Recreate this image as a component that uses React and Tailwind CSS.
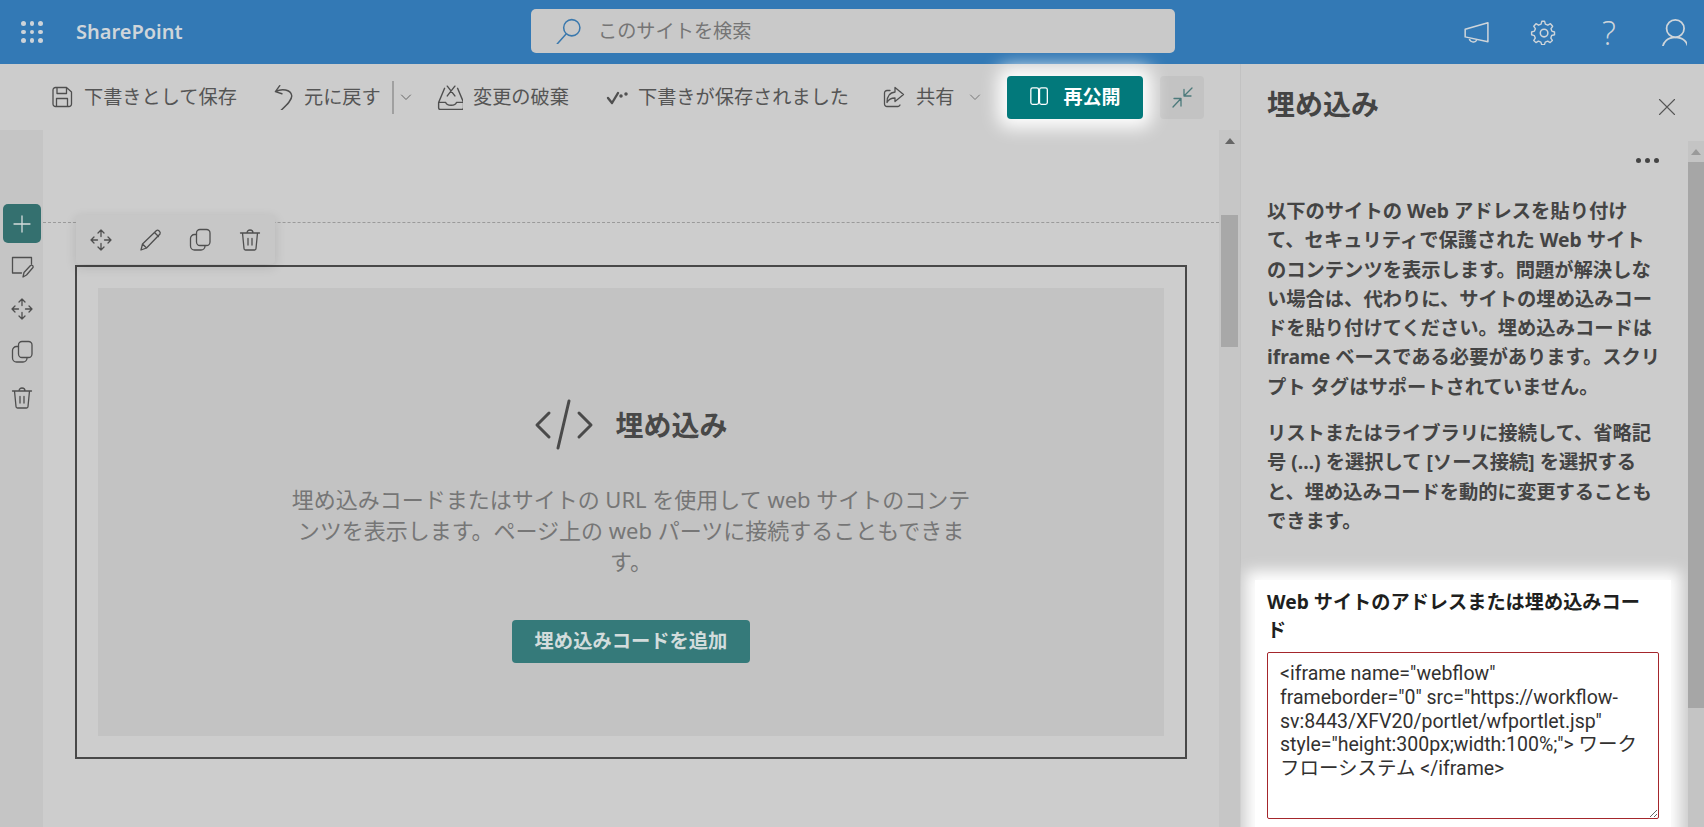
import React from "react";

const S = ({ w = 24, h = 24, vb = "0 0 24 24", c = "#4f4f4f", sw = 1.3, children, className = "" }) => (
  <svg width={w} height={h} viewBox={vb} fill="none" stroke={c} strokeWidth={sw} strokeLinecap="round" strokeLinejoin="round" className={"shrink-0 " + className}>{children}</svg>
);
const Chevron = ({ c = "#666" }) => (<S w={12} h={12} vb="0 0 12 12" c={c} sw={1}><path d="M1.500 4l4.500 4.500L10.500 4" /></S>);
const Move = () => (<S w={24} h={24}><path d="M12 2v6.500M12 15.500V22M2 12h6.500M15.500 12H22M9 5l3-3 3 3M9 19l3 3 3-3M5 9l-3 3 3 3M19 9l3 3-3 3" /></S>);
const Copy = () => (<S w={24} h={24}><rect x="8.500" y="1.500" width="13.500" height="16" rx="3.500" /><path d="M8.500 6.500H6.500a4 4 0 0 0-4 4v7.500a4 4 0 0 0 4 4h6.500a4 4 0 0 0 4-4" /></S>);
const Trash = () => (<S w={24} h={24}><path d="M2.500 5h19M4.500 5l1.500 15.500a1.500 1.500 0 0 0 1.500 1.500h9a1.500 1.500 0 0 0 1.500-1.500L19.500 5M9 5c0-4 6-4 6 0M10 10.500v6.500M14 10.500v6.500" /></S>);
const Pencil = () => (<S w={24} h={24}><path d="M2 22l1.500-6L17.500 2.500c1.500-1.200 4.500 1.500 3.500 3.500L7.500 20z M3.500 16l4 4M15.500 4.500l4 4" /></S>);

const font = "font-['Noto_Sans','Noto_Sans_CJK_JP',sans-serif]";

export default function App() {
  return (
    <div className={"w-[1704px] h-[827px] overflow-hidden flex flex-col bg-[#cccccc] " + font}>
      <header className="h-16 shrink-0 bg-[#3379b5] flex items-center pr-[17px]">
        <div className="ml-[21px] w-[22px] grid grid-cols-3 gap-[4px]">
          {Array.from({ length: 9 }).map((_, i) => (<span key={i} className="w-[4.500px] h-[4.500px] rounded-full bg-[#cdd3d9]" />))}
        </div>
        <span className="ml-[33px] w-[108px] text-[20px] font-semibold text-[#cfd5da] whitespace-nowrap">SharePoint</span>
        <div className="ml-[347px] -mt-[2px] w-[644px] h-[44px] rounded-[5px] bg-[#c9c9c9] flex items-center pl-[24px]">
          <S w={26} h={26} c="#3a78ad" sw={1.400}><path d="M2 24L10 15" /><circle cx="15.500" cy="9" r="7.500" /></S>
          <span className="ml-[17px] text-[19.200px] leading-none text-[#757575]">このサイトを検索</span>
        </div>
        <div className="ml-auto flex items-center">
          <S w={26} h={26} c="#cfd5da" sw={1.400}><path d="M2 9.500L23 3.500V21L2 16.500zM6 17.500c-.5 4 5.500 5 6.500 2" /></S>
          <S w={26} h={26} c="#cfd5da" sw={1.400} className="ml-[41px]"><circle cx="13" cy="13" r="3.500" /><path d="M13 2l2 0 .8 3 2.500 1 2.600-1.500 2.200 2.600-1.600 2.400.8 2.500 2.700.8v2.800l-2.900.8-.8 2.500 1.500 2.400-2.200 2.200-2.400-1.500-2.500 1-.8 2.500h-2.800l-.8-2.500-2.500-1-2.400 1.500-2.200-2.200 1.500-2.400-1-2.500-2.700-.8v-2.800l2.800-.8 1-2.500-1.600-2.400 2.200-2.600 2.600 1.500 2.500-1 .8-3z" transform="scale(.92) translate(-.4 .2)" /></S>
          <span className="ml-[46px] w-[17px] text-[33px] leading-none font-light text-[#cfd5da] font-['Open_Sans',sans-serif]">?</span>
          <S w={28} h={28} c="#cfd5da" sw={1.500} className="ml-[40px]"><circle cx="14" cy="9" r="7.500" /><path d="M3 27c0-7 5-10.500 11-10.500S25 20 25 27" /></S>
        </div>
      </header>
      <div className="flex flex-1 min-h-0">
        <main className="w-[1240px] shrink-0 flex flex-col">
          <div className="relative h-[66px] shrink-0 flex items-center text-[19.200px] text-[#555555] whitespace-nowrap">
            <S w={24} h={24} className="ml-[50px]"><path d="M3 5a2.500 2.500 0 0 1 2.500-2.500h11L21.500 7v12a2.500 2.500 0 0 1-2.500 2.500H5.500A2.500 2.500 0 0 1 3 19zM7 2.500v6h9.500v-6M6.500 21.500v-8h11v8" /></S>
            <span className="ml-[10px] w-[152px]">下書きとして保存</span>
            <S w={26} h={26} className="ml-[34px]"><path d="M9 1.500L5 7l6 2M5 7c6-3 14-2 15 3.500.7 4-4 8.500-10 14" /></S>
            <span className="ml-[8px] w-[76px]">元に戻す</span>
            <span className="ml-[12px] w-[2px] h-[33px] bg-[#a0a0a0]" />
            <span className="ml-[6px]"><Chevron /></span>
            <S w={26} h={26} className="ml-[25px]"><path d="M1.500 17L7 4M24.500 17L19 4M1.500 17v5a1.500 1.500 0 0 0 1.500 1.500h20a1.500 1.500 0 0 0 1.500-1.500v-5M1.500 17H8c1 3.500 9 3.500 10 0h6.500M9.500 2l7 9M16.500 2l-7 9" /></S>
            <span className="ml-[10px] w-[95px]">変更の破棄</span>
            <S w={24} h={24} className="ml-[38px]"><path d="M2 13l4 5 6-10" strokeWidth="2.400" /><circle cx="15" cy="11" r="1.100" fill="#4f4f4f" /><circle cx="20" cy="9" r="1.100" fill="#4f4f4f" /></S>
            <span className="ml-[8px] w-[210px]">下書きが保存されました</span>
            <S w={24} h={24} className="ml-[34px]"><path d="M13 2.500l8.500 7-8.500 7V13c-4 0-6.500 1.500-8 4.500 0-6 3-10 8-10.500zM18 20a2.500 2.500 0 0 1-2 1.500H5A2.500 2.500 0 0 1 2.500 19V8A2.500 2.500 0 0 1 5 5.500h3" /></S>
            <span className="ml-[10px] w-[38px]">共有</span>
            <span className="ml-[15px]"><Chevron c="#777" /></span>
            <button className="ml-[26px] w-[136px] h-[43px] rounded-[4px] bg-[#02797b] text-white font-bold text-[19px] flex items-center justify-center gap-[12px] relative z-10 shadow-[0_0_18px_9px_#ffffff]">
              <S w={22} h={22} c="#ffffff" sw={1.400}><rect x="2" y="2" width="8.500" height="18" rx="2" /><rect x="11.500" y="2" width="8.500" height="18" rx="2" /></S>
              再公開
            </button>
            <div className="ml-[17px] w-[44px] h-[43px] rounded-[4px] bg-[#c3c3c3] flex items-center justify-center">
              <S w={24} h={24} c="#4c7a7b" sw={1.300}><path d="M14 11L22 3M14 4.500V11h7M11 13.500L3 22M4 13.500h7V21" /></S>
            </div>
          </div>
          <div className="flex flex-1 min-h-0">
            <aside className="w-[43px] shrink-0 bg-[#c5c5c5] flex flex-col items-center pt-[74px]">
              <div className="w-[38px] h-[39px] rounded-[5px] bg-[#34706f] flex items-center justify-center">
                <S w={18} h={18} c="#d5dcdc" sw={1.300} vb="0 0 18 18"><path d="M9 1v16M1 9h16" /></S>
              </div>
              <div className="mt-[12px] h-[24px]">
                <S w={24} h={24}><path d="M21.500 9V2.500h-19v15.500h9M13 22l1-4.500 6.500-7c1.500-1 3 .5 2.500 2l-6.500 7.500z" /></S>
              </div>
              <div className="mt-[18px] h-[24px]"><Move /></div>
              <div className="mt-[19px] h-[24px]"><Copy /></div>
              <div className="mt-[22px] h-[24px]"><Trash /></div>
            </aside>
            <section className="relative flex-1 min-w-0 bg-[#cdcdcd] pt-[92px]">
              <div className="border-t border-dashed border-[#9a9a9a] w-full" />
              <div className="absolute left-[33px] top-[85px] w-[199px] h-[49px] rounded-[4px] bg-[#c7c7c7] shadow-[0_3px_12px_rgba(0,0,0,0.12)] flex items-center justify-between px-[13px] z-10">
                <Move /><Pencil /><Copy /><Trash />
              </div>
              <div className="ml-[32px] mt-[42px] w-[1112px] h-[494px] border-2 border-[#484848] p-[21px]">
                <div className="h-full bg-[#c3c3c3] flex flex-col items-center pt-[111px]">
                  <div className="flex items-center h-[52px]">
                    <S w={60} h={52} vb="0 0 60 52" c="#4a4a4a" sw={3}><path d="M15 14L3 26l12 12M45 14l12 12-12 12M35 2L24 49" /></S>
                    <span className="ml-[21px] text-[28px] font-bold text-[#484848] leading-none">埋め込み</span>
                  </div>
                  <p className="mt-[33px] w-[685px] text-center text-[22px] leading-[31px] text-[#767676]">埋め込みコードまたはサイトの URL を使用して web サイトのコンテンツを表示します。ページ上の web パーツに接続することもできます。</p>
                  <button className="mt-[43px] w-[238px] h-[43px] rounded-[4px] bg-[#357a7a] text-[#d2dcdc] font-bold text-[19.300px]">埋め込みコードを追加</button>
                </div>
              </div>
            </section>
            <div className="w-[21px] shrink-0 bg-[#c6c6c6] flex flex-col items-center relative z-10">
              <span className="mt-[8px] w-0 h-0 border-x-[5px] border-x-transparent border-b-[6px] border-b-[#666666]" />
              <span className="mt-[71px] w-[17px] h-[132px] bg-[#a8a8a8]" />
            </div>
          </div>
        </main>
        <aside className="flex-1 min-w-0 flex flex-col border-l border-[#c2c2c2]">
          <div className="h-[77px] shrink-0 flex items-center pl-[26px] pr-[28px] pt-[2px] justify-between">
            <h1 className="text-[28px] font-bold text-[#444444] leading-none">埋め込み</h1>
            <S w={18} h={18} vb="0 0 18 18" c="#555" sw={1.100} className="mt-[6px]"><path d="M1.500 1.500l15 15M16.500 1.500l-15 15" /></S>
          </div>
          <div className="flex flex-1 min-h-0">
            <div className="flex-1 min-w-0 pl-[26px] pr-[29px] relative">
              <div className="absolute right-[29px] top-[17px] flex gap-[4px]">
                <span className="w-[5px] h-[5px] rounded-full bg-[#444444]" /><span className="w-[5px] h-[5px] rounded-full bg-[#444444]" /><span className="w-[5px] h-[5px] rounded-full bg-[#444444]" />
              </div>
              <div className="pt-[55px] text-[19.300px] leading-[29.300px] font-bold text-[#444444] whitespace-nowrap">
                <p>以下のサイトの Web アドレスを貼り付け<br />て、セキュリティで保護された Web サイト<br />のコンテンツを表示します。問題が解決しな<br />い場合は、代わりに、サイトの埋め込みコー<br />ドを貼り付けてください。埋め込みコードは<br />iframe ベースである必要があります。スクリ<br />プト タグはサポートされていません。</p>
                <p className="mt-[17px]">リストまたはライブラリに接続して、省略記<br />号 (...) を選択して [ソース接続] を選択する<br />と、埋め込みコードを動的に変更することも<br />できます。</p>
              </div>
              <div className="mt-[45px] -mx-[12px] px-[12px] pt-[8px] pb-[20px] bg-white shadow-[0_0_14px_9px_#ffffff]">
                <label className="block text-[19.200px] leading-[28px] font-bold text-[#201f1e]">Web サイトのアドレスまたは埋め込みコー<br />ド</label>
                <textarea readOnly className="mt-[8px] block w-full h-[167px] resize rounded-[2px] border border-[#a4262c] bg-white pl-[12px] pr-[6px] py-[9px] text-[19.500px] leading-[23.700px] text-[#323130] outline-none font-['Roboto','Noto_Sans_CJK_JP',sans-serif]" defaultValue={'<iframe name="webflow"\nframeborder="0" src="https://workflow-\nsv:8443/XFV20/portlet/wfportlet.jsp"\nstyle="height:300px;width:100%;"> ワーク\nフローシステム </iframe>'} />
              </div>
            </div>
            <div className="w-[16px] shrink-0 bg-[#c4c4c4] flex flex-col items-center relative z-10">
              <div className="h-[21px] flex items-center">
                <span className="w-0 h-0 border-x-[5px] border-x-transparent border-b-[6px] border-b-[#9a9a9a]" />
              </div>
              <span className="w-full h-[546px] bg-[#a6a6a6]" />
            </div>
          </div>
        </aside>
      </div>
    </div>
  );
}
